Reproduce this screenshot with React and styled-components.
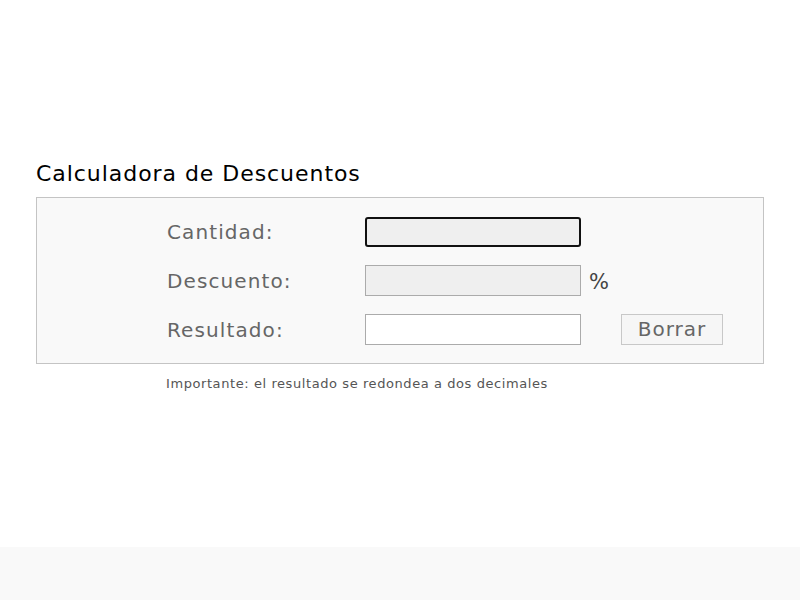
import React, { useState } from 'react';
import styled, { createGlobalStyle } from 'styled-components';

const GlobalStyle = createGlobalStyle`
  html, body {
    margin: 0;
    padding: 0;
    background: #fff;
    font-family: "DejaVu Sans", Verdana, sans-serif;
  }
`;

export default function App() {
  const [cantidad, setCantidad] = useState('');
  const [descuento, setDescuento] = useState('');

  const cant = parseFloat(cantidad.replace(',', '.'));
  const desc = parseFloat(descuento.replace(',', '.'));
  const resultado = !Number.isNaN(cant) && !Number.isNaN(desc)
    ? (cant - (cant * desc) / 100).toFixed(2)
    : '';

  function borrar() {
    setCantidad('');
    setDescuento('');
  }

  return (
    <Page>
      <GlobalStyle />
      <Main>
        <Title>Calculadora de Descuentos</Title>
        <Panel>
          <Row>
            <Label htmlFor="cantidad">Cantidad:</Label>
            <Field id="cantidad" focused value={cantidad} onChange={(e) => setCantidad(e.target.value)} />
          </Row>
          <Row>
            <Label htmlFor="descuento">Descuento:</Label>
            <Field id="descuento" value={descuento} onChange={(e) => setDescuento(e.target.value)} />
            <Unit>%</Unit>
          </Row>
          <Row>
            <Label htmlFor="resultado">Resultado:</Label>
            <Field id="resultado" readOnly white value={resultado} />
            <ClearButton type="button" onClick={borrar}>Borrar</ClearButton>
          </Row>
        </Panel>
        <Note>Importante: el resultado se redondea a dos decimales</Note>
      </Main>
      <Footer />
    </Page>
  );
}

const Page = styled.div`
  display: flex;
  flex-direction: column;
  min-height: 100vh;
`;

const Main = styled.main`
  flex: 1;
  width: 728px;
  margin: 0 auto;
  padding-top: 159px;
`;

const Title = styled.h1`
  margin: 0 0 8px;
  font-size: 22px;
  font-weight: 400;
  line-height: 30px;
  letter-spacing: 0.95px;
  color: #000;
`;

const Panel = styled.section`
  display: flex;
  flex-direction: column;
  gap: 18px;
  padding: 18px 0 18px 130px;
  background: #f9f9f9;
  border: 1px solid #c4c4c4;
`;

const Row = styled.div`
  display: flex;
  align-items: center;
  height: 31px;
`;

const Label = styled.label`
  width: 198px;
  font-size: 20px;
  letter-spacing: 1.1px;
  color: #666;
`;

const Field = styled.input`
  box-sizing: border-box;
  width: 216px;
  height: ${(props) => (props.focused ? '30px' : '31px')};
  margin: 0;
  padding: 2px 6px;
  font-family: inherit;
  font-size: 18px;
  color: #333;
  background: ${(props) => (props.white ? '#fff' : '#efefef')};
  border: ${(props) => (props.focused ? '2px solid #111' : '1px solid #ababab')};
  border-radius: ${(props) => (props.focused ? '3px' : '0')};
  outline: none;
`;

const Unit = styled.span`
  margin: 2px 0 0 8px;
  font-size: 21px;
  letter-spacing: 1px;
  color: #444;
`;

const ClearButton = styled.button`
  box-sizing: border-box;
  width: 102px;
  height: 31px;
  margin-left: 40px;
  padding: 0 0 2px;
  font-family: inherit;
  font-size: 20px;
  letter-spacing: 1px;
  color: #666;
  background: #f6f6f6;
  border: 1px solid #c8c8c8;
  cursor: pointer;
`;

const Note = styled.p`
  margin: 12px 0 0 130px;
  font-size: 13px;
  letter-spacing: 0.58px;
  color: #555;
`;

const Footer = styled.footer`
  height: 53px;
  background: #f9f9f9;
`;
